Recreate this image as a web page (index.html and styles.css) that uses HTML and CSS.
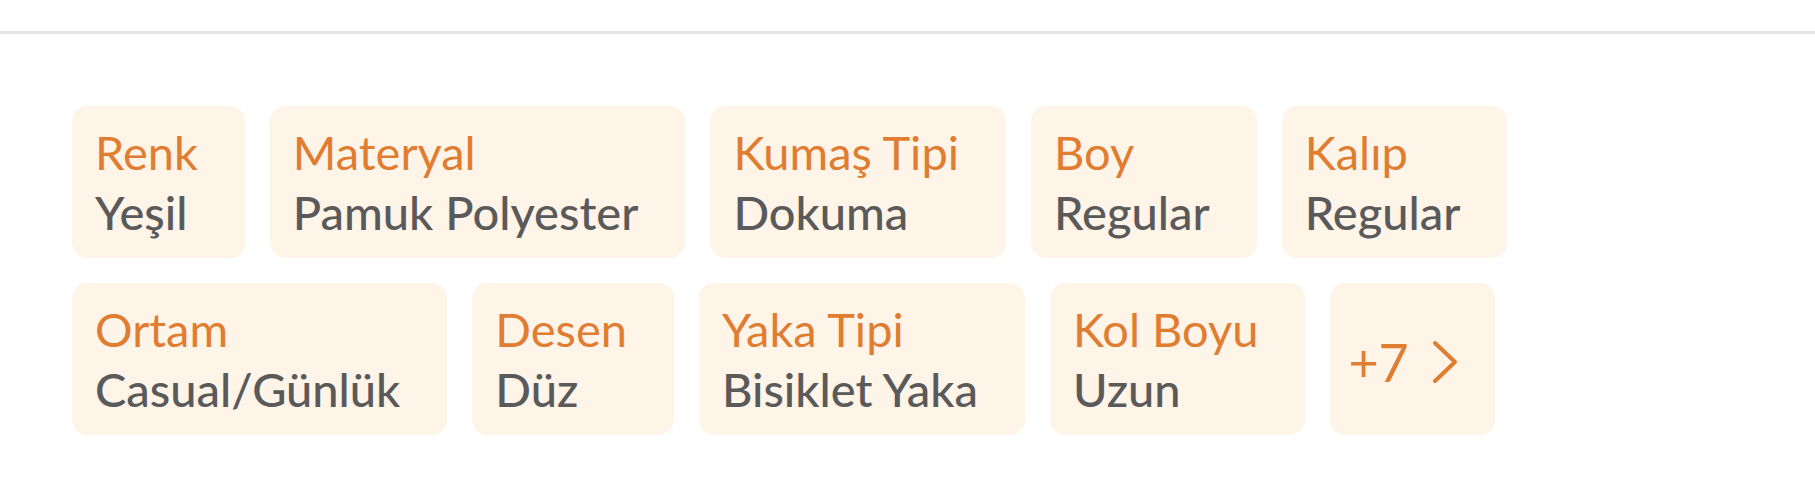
FILE: index.html
```html
<!DOCTYPE html>
<html lang="tr">
<head>
    <meta charset="UTF-8">
    <meta name="viewport" content="width=device-width, initial-scale=1.0">
    <title>Ürün Özellikleri</title>
    <link rel="stylesheet" href="styles.css">
</head>
<body>
    <hr class="divider">
    <div class="attributes">
        <div class="attr">
            <span class="attr-name">Renk</span>
            <span class="attr-value">Yeşil</span>
        </div>
        <div class="attr">
            <span class="attr-name">Materyal</span>
            <span class="attr-value">Pamuk Polyester</span>
        </div>
        <div class="attr">
            <span class="attr-name">Kumaş Tipi</span>
            <span class="attr-value">Dokuma</span>
        </div>
        <div class="attr">
            <span class="attr-name">Boy</span>
            <span class="attr-value">Regular</span>
        </div>
        <div class="attr">
            <span class="attr-name">Kalıp</span>
            <span class="attr-value">Regular</span>
        </div>
        <div class="attr">
            <span class="attr-name">Ortam</span>
            <span class="attr-value">Casual/Günlük</span>
        </div>
        <div class="attr">
            <span class="attr-name">Desen</span>
            <span class="attr-value">Düz</span>
        </div>
        <div class="attr">
            <span class="attr-name">Yaka Tipi</span>
            <span class="attr-value">Bisiklet Yaka</span>
        </div>
        <div class="attr">
            <span class="attr-name">Kol Boyu</span>
            <span class="attr-value">Uzun</span>
        </div>
        <button class="attr more">
            +7
            <svg width="28" height="44" viewBox="0 0 28 44">
                <path d="M4 3 L24 22 L4 41" fill="none" stroke="#e07d31" stroke-width="4" stroke-linecap="round" stroke-linejoin="round"/>
            </svg>
        </button>
    </div>
</body>
</html>
```

FILE: styles.css
```css
body {
    margin: 0;
    background: #ffffff;
    font-family: Lato, "Open Sans", sans-serif;
}
.divider {
    margin: 31px 0 0;
    border: none;
    height: 3px;
    background: #e4e4e4;
}
.attributes {
    display: flex;
    flex-wrap: wrap;
    gap: 25px;
    width: 1520px;
    padding: 72px 0 0 72px;
}
.attr {
    display: flex;
    flex-direction: column;
    padding: 16px 47px 16px 23px;
    background: #fef4e8;
    border-radius: 15px;
}
.attr-name {
    font-size: 47px;
    line-height: 60px;
    color: #e07d31;
}
.attr-value {
    font-size: 47px;
    font-weight: 500;
    line-height: 60px;
    color: #5a5a5a;
}
.more {
    flex-direction: row;
    align-items: center;
    gap: 22px;
    border: none;
    padding: 6px 36px 0 18px;
    font-family: inherit;
    font-size: 52px;
    color: #e07d31;
    cursor: pointer;
}
```
